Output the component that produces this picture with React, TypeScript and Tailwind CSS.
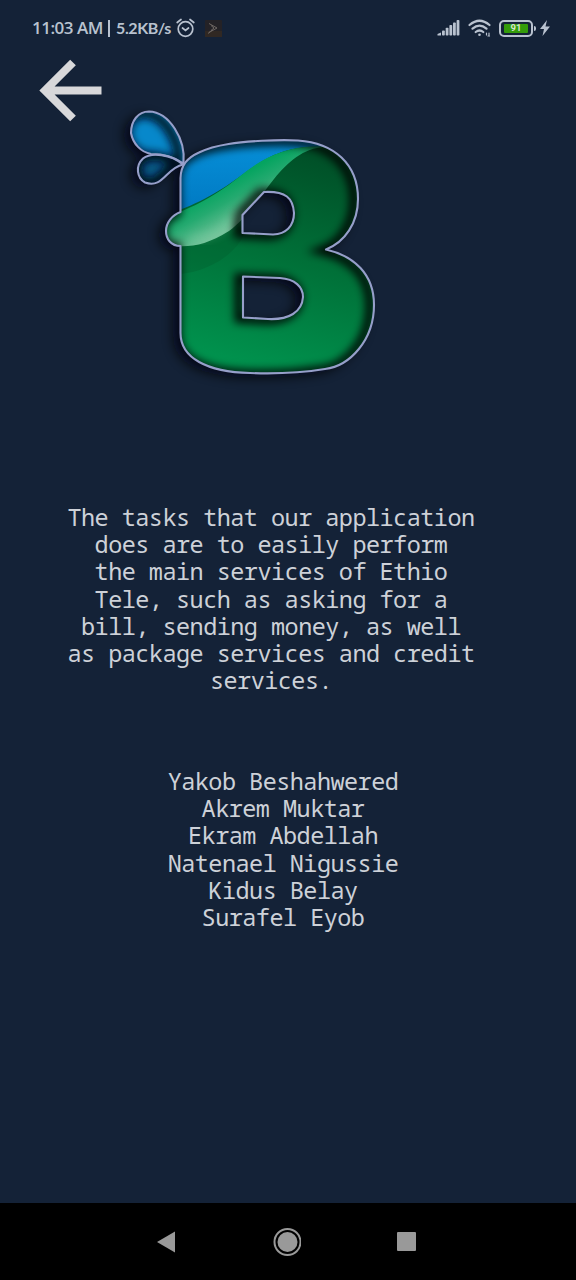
const B_OUTER =
  'M180.5 212 L180.5 178 C181 165 187 158 199 152.5 C216 144 240 142 262 140.8 C276 140 286 139.7 298 140.5 C334 143 358 164 358 199 C358 223 345 242 326 249.5 C354 256 374 274 374 305 C374 340 350 366 325 369 C300 373 276 374 250 373 C207 372 180.5 358 180.5 333 L180.5 246 C171 246 166 239 166 231 C166 223 172 215 180.5 212 Z';
const COUNTERS =
  'M264 192 L242.5 215 L242.5 233 L273 234.5 C286 234 294 226 294 213 C293 198 286 191 264 192 Z M243 276.5 L280 278 C295 279 303 287 303 297 C302 312 289 320 268 319 L243 317.5 Z';
const BODY = `${B_OUTER} ${COUNTERS}`;
const DROP_BIG =
  'M183.500 163.500 C186 139 169 112 149 111.500 C138 111.500 131 121 131 133 C133 144 141 152 151 154 C165 154 176 158 183.500 163.500 Z';
const DROP_SMALL =
  'M183 164.500 C171 154 151 152 143 158.500 C135 166 137 178 145 182.500 C163 189 166 168 183 164.500 Z';

function Logo() {
  return (
    <svg viewBox="100 95 300 300" className="block h-[300px] w-[300px]" aria-label="B logo">
      <defs>
        <linearGradient id="green" x1="0.65" y1="0" x2="0.4" y2="1">
          <stop offset="0.1" stopColor="#005128" />
          <stop offset="0.5" stopColor="#007038" />
          <stop offset="1" stopColor="#009650" />
        </linearGradient>
        <linearGradient id="blue" x1="0" y1="0" x2="0" y2="1">
          <stop offset="0" stopColor="#0793dc" />
          <stop offset="1" stopColor="#0077c0" />
        </linearGradient>
        <linearGradient id="curl" gradientUnits="userSpaceOnUse" x1="218" y1="188" x2="238" y2="224">
          <stop offset="0" stopColor="#05a460" />
          <stop offset="0.4" stopColor="#25aa70" />
          <stop offset="1" stopColor="#72c299" />
        </linearGradient>
        <clipPath id="bodyClip"><path d={BODY} clipRule="evenodd" /></clipPath>
        <clipPath id="bigClip"><path d={DROP_BIG} /></clipPath>
        <clipPath id="smallClip"><path d={DROP_SMALL} /></clipPath>
        <filter id="blur" x="-20%" y="-20%" width="140%" height="140%">
          <feGaussianBlur stdDeviation="4.500" />
        </filter>
        <filter id="outerBlur" x="-20%" y="-20%" width="140%" height="140%">
          <feGaussianBlur stdDeviation="6" />
        </filter>
      </defs>
      <g filter="url(#outerBlur)" transform="translate(-7 4)" opacity="0.8">
        <path d={BODY} fillRule="evenodd" fill="#02060e" />
        <path d={DROP_BIG} fill="#02060e" />
        <path d={DROP_SMALL} fill="#02060e" />
      </g>
      <g clipPath="url(#bodyClip)">
        <rect x="160" y="130" width="220" height="250" fill="url(#green)" />
        <path d="M180 246 L180 274 C215 270 241 250 248 225 L270 180 Z" fill="#00582c" opacity="0.3" />
        <path d="M160 130 H325 V147 C285 145 265 158 242 175 C220 191 200 204 160 217 Z" fill="url(#blue)" />
        <path
          d="M160 220 C200 205 219 193 239 177 C263 157 290 144 325 147 C303 148 288 162 274 179 C259 198 246 219 229 231 C208 244 194 247 176 246 L160 246 Z"
          fill="url(#curl)"
        />
        <g filter="url(#blur)">
          <path d={BODY} fill="none" stroke="#000" strokeWidth="9" opacity="0.9" transform="translate(-4 1)" />
        </g>
        <path
          d="M190 239 C215 239 228 224 238 212"
          fill="none"
          stroke="#8ddbb4"
          strokeWidth="8"
          opacity="0.25"
          filter="url(#blur)"
        />
      </g>
      <path d={DROP_BIG} fill="#0788cb" />
      <g clipPath="url(#bigClip)">
        <path d={DROP_BIG} fill="none" stroke="#00101f" strokeWidth="9" filter="url(#blur)" transform="translate(-5 2)" />
      </g>
      <path d={DROP_SMALL} fill="#085d8c" />
      <g clipPath="url(#smallClip)">
        <path d={DROP_SMALL} fill="none" stroke="#00101f" strokeWidth="12" filter="url(#blur)" transform="translate(-2 0)" />
      </g>
      <g fill="none" stroke="#969fca" strokeWidth="2.100" strokeLinejoin="round">
        <path d={BODY} />
        <path d={DROP_SMALL} />
        <path d={DROP_BIG} />
      </g>
    </svg>
  );
}

function StatusBar() {
  return (
    <div className="flex h-14 items-center pl-[32px] pr-[25px] font-['Open_Sans',sans-serif] text-[#b9c2cf]">
      <span className="w-[71px] whitespace-nowrap text-[17px] font-semibold tracking-[-0.500px]">11:03 AM</span>
      <span className="ml-[5px] h-[17px] w-[2px] bg-[#b9c2cf]" />
      <span className="ml-[6px] w-[55px] whitespace-nowrap font-['Lato',sans-serif] text-[16px] font-bold tracking-[-0.4px]">5.2KB/s</span>
      <svg viewBox="0 0 20 20" className="ml-[5px] h-5 w-5" fill="none" stroke="#b9c2cf" strokeWidth="1.700" strokeLinecap="round">
        <circle cx="9.500" cy="11" r="7.300" />
        <path d="M1.200 4.500 5 1.500 M14 1.500 17.800 4.500 M6.500 10 9.500 12.500 12.500 10" />
      </svg>
      <svg viewBox="0 0 17 17" className="ml-[9px] h-[17px] w-[17px]">
        <rect width="17" height="17" rx="1" fill="#242226" />
        <rect y="11" width="17" height="6" fill="#302823" />
        <path d="M4 3.500 12 8 4 12.500 M6 5.500 9 8 6 10.500 M3 13.500 7 10" fill="none" stroke="#6f6864" strokeWidth="1" />
      </svg>
      <svg viewBox="0 0 24 18" className="ml-auto h-[18px] w-6" fill="#b9c2cf">
        <path d="M0.500 16.500V15l3.500-1.500v3z" />
        <rect x="5" y="11.500" width="2.800" height="5" rx="0.800" />
        <rect x="8.700" y="8.700" width="2.800" height="7.800" rx="0.800" />
        <rect x="12.400" y="6" width="2.800" height="10.500" rx="0.800" />
        <rect x="16" y="3.500" width="2.800" height="13" rx="0.800" />
        <rect x="19.600" y="1" width="2.800" height="15.500" rx="0.800" />
      </svg>
      <svg viewBox="0 0 24 18" className="ml-[7px] h-[18px] w-6" fill="none" stroke="#b9c2cf" strokeWidth="2.200" strokeLinecap="round">
        <path d="M1.500 6 Q11.500 -2.500 21.500 6 M4.500 9.700 Q11.500 3.700 18.500 9.700 M7.700 13 Q11.500 10 15.300 13" />
        <circle cx="11.500" cy="15.800" r="1.300" fill="#b9c2cf" stroke="none" />
        <path d="M18.500 16v-2 M21 14v3 M20 17h1.500" strokeWidth="1.200" />
      </svg>
      <div className="ml-[7px] flex h-[17px] w-[34px] items-center justify-center rounded-[5px] border-2 border-[#b9c2cf]">
        <div className="flex h-[9px] w-[24px] items-center justify-center rounded-[1px] bg-[#349c0b] font-['Roboto'] text-[9.500px] font-bold leading-none text-[#d4e5ce]">
          91
        </div>
      </div>
      <span className="ml-px h-[5px] w-[2px] rounded-r bg-[#b9c2cf]" />
      <svg viewBox="0 0 12 16" className="ml-[3px] h-4 w-3" fill="#b9c2cf">
        <path d="M8 0 1 9h4L3.500 16 11 6.500H6.500z" />
      </svg>
    </div>
  );
}

const ABOUT = [
  'The tasks that our application',
  'does are to easily perform',
  'the main services of Ethio',
  'Tele, such as asking for a',
  'bill, sending money, as well',
  'as package services and credit',
  'services.',
];
const NAMES = ['Yakob Beshahwered', 'Akrem Muktar', 'Ekram Abdellah', 'Natenael Nigussie', 'Kidus Belay', 'Surafel Eyob'];

export default function App() {
  return (
    <div className="flex h-[1280px] w-[576px] flex-col overflow-hidden bg-[#142237]">
      <StatusBar />
      <header className="relative h-[339px]">
        <button className="ml-[36px] block h-[70px] w-[70px]" aria-label="Back">
          <svg viewBox="36 56 70 70" className="block h-[70px] w-[70px]" fill="none" stroke="#d8d8da" strokeWidth="8">
            <path d="M73 62.500 45 90.500 73 118.500 M45 90.500H101.500" />
          </svg>
        </button>
        <div className="absolute left-[100px] top-[39px]">
          <Logo />
        </div>
      </header>
      <main className="flex flex-1 flex-col whitespace-pre text-center font-['Droid_Sans_Mono','Noto_Sans_Mono','DejaVu_Sans_Mono',monospace] text-[23.500px] leading-[27.200px] tracking-[-0.530px] text-[#cdd1d8]">
        <section className="mt-[109px] w-[542px]">
          {ABOUT.map((line) => <p key={line}>{line}</p>)}
        </section>
        <section className="mt-[73.500px] w-[566px]">
          {NAMES.map((name) => <p key={name}>{name}</p>)}
        </section>
      </main>
      <nav className="flex h-[77px] items-center bg-black pl-[157px]">
        <svg viewBox="0 0 18 22" className="h-[22px] w-[18px]" fill="#999">
          <path d="M0 11 18 0.500v21z" />
        </svg>
        <svg viewBox="0 0 28 28" className="ml-[98px] h-7 w-7" fill="#999">
          <circle cx="14.500" cy="14" r="10" />
          <circle cx="14.500" cy="14" r="13" fill="none" stroke="#999" strokeWidth="2" />
        </svg>
        <span className="ml-[96px] h-[19px] w-[19px] rounded-[1px] bg-[#999]" />
      </nav>
    </div>
  );
}
